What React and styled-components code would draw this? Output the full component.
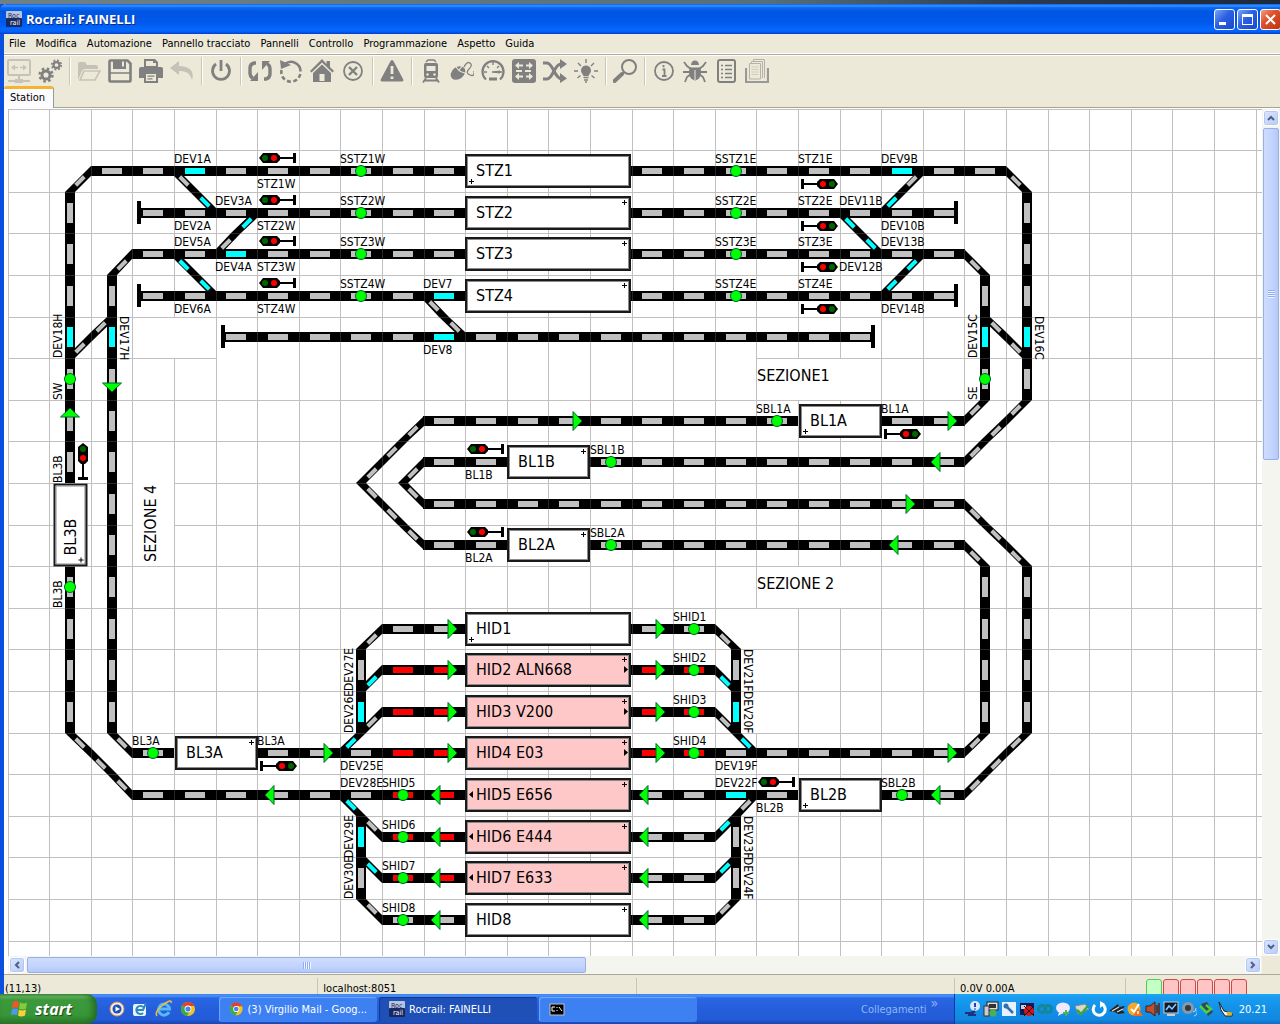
import React from 'react';
import styled, { createGlobalStyle, css } from 'styled-components';

const CELL = 41.6;
const COLS = 46;
const ROWS = 30;

// plan coordinates are counted in half cells: even = cell edge, odd = cell centre
const at = (n) => Math.floor((n * CELL) / 2 + 0.01);

const TRACKS = [
  [[22, 3], [4, 3], [3, 4], [3, 18]],
  [[3, 22], [3, 30], [6, 33], [22, 33]],
  [[22, 7], [6, 7], [5, 8], [5, 30], [6, 31], [8, 31]],
  [[12, 31], [22, 31]],
  [[6, 5], [22, 5]],
  [[6, 9], [22, 9]],
  [[10, 11], [42, 11]],
  [[30, 3], [48, 3], [49, 4], [49, 14], [46, 17], [28, 17]],
  [[24, 17], [20, 17], [19, 18], [20, 19], [46, 19], [49, 22], [49, 30], [46, 33], [42, 33]],
  [[38, 33], [30, 33]],
  [[30, 5], [46, 5]],
  [[30, 7], [46, 7], [47, 8], [47, 14], [46, 15], [42, 15]],
  [[38, 15], [20, 15], [17, 18], [20, 21], [24, 21]],
  [[28, 21], [46, 21], [47, 22], [47, 30], [46, 31], [30, 31]],
  [[30, 9], [46, 9]],
  [[22, 25], [18, 25], [17, 26], [17, 30]],
  [[22, 27], [18, 27], [17, 28]],
  [[22, 29], [18, 29], [17, 30], [16, 31]],
  [[30, 25], [34, 25], [35, 26], [35, 30]],
  [[30, 27], [34, 27], [35, 28]],
  [[30, 29], [34, 29], [35, 30], [36, 31]],
  [[22, 39], [18, 39], [17, 38], [17, 34]],
  [[22, 37], [18, 37], [17, 36]],
  [[22, 35], [18, 35], [17, 34], [16, 33]],
  [[30, 39], [34, 39], [35, 38], [35, 34]],
  [[30, 37], [34, 37], [35, 36]],
  [[30, 35], [34, 35], [35, 34], [36, 33]],
  [[8, 3], [10, 5]],
  [[12, 5], [10, 7]],
  [[8, 7], [10, 9]],
  [[20, 9], [22, 11]],
  [[5, 10], [3, 12]],
  [[44, 3], [42, 5]],
  [[40, 5], [42, 7]],
  [[44, 7], [42, 9]],
  [[47, 10], [49, 12]],
];

const ROUTED = new Set([
  '9,3', '11,7', '21,9', '21,11', '3,11', '5,11', '43,3', '47,11', '49,11', '17,29', '35,29', '17,35', '35,33',
  '9.5,4.5', '11.5,5.5', '8.5,7.5', '9.5,8.5', '42.5,4.5', '40.5,5.5', '41.5,6.5', '43.5,7.5', '42.5,8.5',
  '17.5,27.5', '16.5,30.5', '34.5,27.5', '35.5,30.5', '16.5,33.5', '17.5,36.5', '34.5,34.5', '34.5,36.5',
]);

const OCCUPIED = new Set([
  '19,27', '21,27', '19,29', '21,29', '19,31', '21,31', '31,27', '33,27', '31,29', '33,29', '31,31', '33,31',
  '19,33', '21,33', '19,35', '21,35', '19,37', '21,37',
]);

const BUFFERS = [[6, 5, 1], [6, 9, 1], [10, 11, 1], [42, 11, -1], [46, 5, -1], [46, 9, -1]];

const SENSORS = [
  [17, 3], [17, 5], [17, 7], [17, 9], [35, 3], [35, 5], [35, 7], [35, 9],
  [3, 13], [47, 13], [37, 15], [29, 17], [29, 21], [3, 23], [7, 31],
  [33, 25], [33, 27], [33, 29], [33, 31], [19, 33], [19, 35], [19, 37], [19, 39], [43, 33],
];

const ARROWS = [
  [21, 25, 0], [21, 27, 0], [21, 29, 0], [21, 31, 0], [31, 25, 0], [31, 27, 0], [31, 29, 0], [31, 31, 0],
  [15, 31, 0], [45, 31, 0], [45, 15, 0], [27, 15, 0], [43, 19, 0],
  [45, 17, 180], [43, 21, 180], [45, 33, 180], [13, 33, 180],
  [21, 33, 180], [21, 35, 180], [21, 37, 180], [21, 39, 180],
  [31, 33, 180], [31, 35, 180], [31, 37, 180], [31, 39, 180],
  [5, 13, 90], [3, 15, -90],
];

const SIGNALS = [
  [13, 3, 0], [13, 5, 0], [13, 7, 0], [13, 9, 0],
  [39, 3, 180], [39, 5, 180], [39, 7, 180], [39, 9, 180],
  [23, 17, 0], [23, 21, 0], [43, 15, 180], [13, 31, 180], [37, 33, 0], [3, 17, 90],
];

// [text, column, row, side of the cell]
const LABELS = [
  ['DEV1A', 4, 1, 'top'], ['STZ1W', 6, 1, 'bottom'], ['SSTZ1W', 8, 1, 'top'],
  ['DEV2A', 4, 2, 'bottom'], ['DEV3A', 5, 2, 'top'], ['STZ2W', 6, 2, 'bottom'], ['SSTZ2W', 8, 2, 'top'],
  ['DEV5A', 4, 3, 'top'], ['DEV4A', 5, 3, 'bottom'], ['STZ3W', 6, 3, 'bottom'], ['SSTZ3W', 8, 3, 'top'],
  ['DEV6A', 4, 4, 'bottom'], ['STZ4W', 6, 4, 'bottom'], ['SSTZ4W', 8, 4, 'top'],
  ['DEV7', 10, 4, 'top'], ['DEV8', 10, 5, 'bottom'],
  ['DEV18H', 1, 5, 'left'], ['DEV17H', 2, 5, 'right'], ['SW', 1, 6, 'left'],
  ['BL3B', 1, 8, 'left'], ['BL3B', 1, 11, 'left'],
  ['SSTZ1E', 17, 1, 'top'], ['STZ1E', 19, 1, 'top'], ['DEV9B', 21, 1, 'top'],
  ['SSTZ2E', 17, 2, 'top'], ['STZ2E', 19, 2, 'top'], ['DEV11B', 20, 2, 'top'], ['DEV10B', 21, 2, 'bottom'],
  ['SSTZ3E', 17, 3, 'top'], ['STZ3E', 19, 3, 'top'], ['DEV12B', 20, 3, 'bottom'], ['DEV13B', 21, 3, 'top'],
  ['SSTZ4E', 17, 4, 'top'], ['STZ4E', 19, 4, 'top'], ['DEV14B', 21, 4, 'bottom'],
  ['DEV15C', 23, 5, 'left'], ['DEV16C', 24, 5, 'right'], ['SE', 23, 6, 'left'],
  ['SBL1A', 18, 7, 'top'], ['BL1A', 21, 7, 'top'], ['BL1B', 11, 8, 'bottom'], ['SBL1B', 14, 8, 'top'],
  ['BL2A', 11, 10, 'bottom'], ['SBL2A', 14, 10, 'top'],
  ['BL3A', 3, 15, 'top'], ['BL3A', 6, 15, 'top'], ['DEV25E', 8, 15, 'bottom'], ['DEV28E', 8, 16, 'top'],
  ['SHID1', 16, 12, 'top'], ['SHID2', 16, 13, 'top'], ['SHID3', 16, 14, 'top'], ['SHID4', 16, 15, 'top'],
  ['SHID5', 9, 16, 'top'], ['SHID6', 9, 17, 'top'], ['SHID7', 9, 18, 'top'], ['SHID8', 9, 19, 'top'],
  ['DEV27E', 8, 13, 'left'], ['DEV26E', 8, 14, 'left'], ['DEV29E', 8, 17, 'left'], ['DEV30E', 8, 18, 'left'],
  ['DEV21F', 17, 13, 'right'], ['DEV20F', 17, 14, 'right'], ['DEV19F', 17, 15, 'bottom'],
  ['DEV22F', 17, 16, 'top'], ['BL2B', 18, 16, 'bottom'],
  ['DEV23F', 17, 17, 'right'], ['DEV24F', 17, 18, 'right'], ['SBL2B', 21, 16, 'top'],
];

const BLOCKS = [
  { name: 'STZ1', col: 11, row: 1, span: 4, plus: 'low' },
  { name: 'STZ2', col: 11, row: 2, span: 4 },
  { name: 'STZ3', col: 11, row: 3, span: 4 },
  { name: 'STZ4', col: 11, row: 4, span: 4 },
  { name: 'BL1A', col: 19, row: 7, span: 2, plus: 'low' },
  { name: 'BL1B', col: 12, row: 8, span: 2 },
  { name: 'BL2A', col: 12, row: 10, span: 2 },
  { name: 'BL3B', col: 1, row: 9, span: 2, plus: 'low', vertical: true },
  { name: 'HID1', col: 11, row: 12, span: 4, plus: 'low' },
  { name: 'HID2 ALN668', col: 11, row: 13, span: 4, busy: true, dir: 'right' },
  { name: 'HID3 V200', col: 11, row: 14, span: 4, busy: true, dir: 'right' },
  { name: 'HID4 E03', col: 11, row: 15, span: 4, busy: true, dir: 'right' },
  { name: 'BL3A', col: 4, row: 15, span: 2 },
  { name: 'HID5 E656', col: 11, row: 16, span: 4, busy: true, dir: 'left' },
  { name: 'BL2B', col: 19, row: 16, span: 2, plus: 'low' },
  { name: 'HID6 E444', col: 11, row: 17, span: 4, busy: true, dir: 'left' },
  { name: 'HID7 E633', col: 11, row: 18, span: 4, busy: true, dir: 'left' },
  { name: 'HID8', col: 11, row: 19, span: 4 },
];

// cells that hide the grid behind them: x, y, width, height in half cells
const BLANKS = [
  [36, 12, 6, 2], [36, 22, 6, 2], [6, 16, 2, 6], [6, 10, 4, 2],
  [35, 24, 2, 2], [35, 26, 2, 2], [35, 28, 2, 2],
  ...Array.from({ length: 13 }, (_, i) => [10 + i * 2, 11, 2, 2]),
];

const MENUS = ['File', 'Modifica', 'Automazione', 'Pannello tracciato', 'Pannelli', 'Controllo', 'Programmazione', 'Aspetto', 'Guida'];

const GlobalStyle = createGlobalStyle`
  * {
    box-sizing: border-box;
  }

  body {
    margin: 0;
    overflow: hidden;
    background: #33475c;
    font-family: "DejaVu Sans Condensed", "DejaVu Sans", sans-serif;
    font-size: 11px;
    color: #000;
  }

  button {
    margin: 0;
    padding: 0;
    border: 0;
    background: none;
    font: inherit;
    color: inherit;
    white-space: nowrap;
  }
`;

const Screen = styled.div`
  display: flex;
  flex-direction: column;
  height: 100vh;
`;

const Wallpaper = styled.div`
  flex: none;
  height: 4px;
  background: linear-gradient(90deg, #6f8186 0, #54707c 60%, #2a3a50 80%, #1d2a3d 100%);
`;

const Window = styled.main`
  flex: 1;
  min-height: 0;
  display: flex;
  flex-direction: column;
  border-left: 4px solid #0a4fe0;
  background: #ece9d8;
`;

const TitleBar = styled.header`
  flex: none;
  height: 30px;
  margin-left: -4px;
  padding: 0 0 0 6px;
  display: flex;
  align-items: center;
  gap: 4px;
  border-radius: 6px 0 0 0;
  background: linear-gradient(#0a5be8 0, #3a92ff 6%, #0a6bf5 12%, #0055e2 25%, #0058ea 60%, #0468ff 85%, #0560f2 92%, #003dd0 100%);
`;

const Title = styled.h1`
  flex: 1;
  margin: 0;
  font-family: "Open Sans", "Noto Sans", sans-serif;
  font-size: 13px;
  font-weight: 700;
  color: #fff;
  text-shadow: 1px 1px #0a2a80;
`;

const WindowButton = styled.button`
  width: 21px;
  height: 21px;
  margin-right: -2px;
  display: grid;
  place-items: center;
  border: 1px solid #fff;
  border-radius: 3px;
  background: ${({ $close }) =>
    $close ? 'linear-gradient(135deg, #f0a080, #e0502c 40%, #c03410)' : 'linear-gradient(135deg, #7ba2f4, #2c60e4 45%, #1a48cc)'};

  &:last-child {
    margin-right: -1px;
  }
`;

const WindowButtons = styled.div`
  display: flex;
  gap: 4px;
`;

const MenuBar = styled.nav`
  flex: none;
  height: 20px;
  padding: 0 5px;
  display: flex;
  align-items: center;
  gap: 10px;
  border-bottom: 1px solid #fff;
`;

const Toolbar = styled.div`
  flex: none;
  height: 32px;
  display: flex;
  align-items: center;
  border-top: 1px solid #aca899;
  box-shadow: inset 0 1px #fff;
`;

const ToolButton = styled.button`
  width: 31px;
  height: 30px;
  padding-right: 1px;
  display: grid;
  place-items: center;
  color: ${({ $off }) => ($off ? '#c5c3b8' : '#808080')};
`;

const ToolSeparator = styled.span`
  width: 8px;
  height: 28px;
  background: linear-gradient(90deg, transparent 3px, #c9c6b6 3px, #c9c6b6 4px, #fff 4px, #fff 5px, transparent 5px);
`;

const Tabs = styled.div`
  flex: none;
  height: 22px;
  border-bottom: 1px solid #a5a397;
`;

const Tab = styled.button`
  height: 22px;
  width: 50px;
  padding: 0 2px 2px 0;
  border: 1px solid #919b9c;
  border-top: 3px solid #f5b335;
  border-bottom: 0;
  border-left: 0;
  border-radius: 3px 3px 0 0;
  background: #fcfcfe;
`;

const Workspace = styled.section`
  flex: 1;
  min-height: 0;
  padding: 1px 0 0 4px;
  display: grid;
  grid-template-columns: minmax(0, 1fr) 18px;
  grid-template-rows: minmax(0, 1fr) 18px;
  border-bottom: 1px solid #aca899;
  background: #fff;
`;

const Canvas = styled.div`
  position: relative;
  overflow: hidden;
  background: #fff;
`;

const Plan = styled.svg`
  display: block;

  text {
    font-family: "DejaVu Sans Condensed", "DejaVu Sans", sans-serif;
    font-size: 12px;
    fill: #000;
  }

  text.section {
    font-size: 16px;
  }
`;

const BlockBox = styled.button`
  position: absolute;
  height: 34px;
  padding-left: 9px;
  border: 2px solid #1a1a1a;
  box-shadow: inset 0 0 0 1px #8a8a8a;
  background: ${({ $busy }) => ($busy ? '#ffc8c8' : '#fff')};
  font-size: 16px;
  line-height: 30px;
  text-align: left;
  ${({ $vertical }) => $vertical && css`transform: rotate(-90deg);`}
`;

const BlockMark = styled.svg`
  position: absolute;
  width: 7px;
  height: 7px;
  ${({ $place }) => $place === 'high' && css`top: 1px; right: 1px;`}
  ${({ $place }) => $place === 'low' && css`bottom: 1px; left: 1px;`}
  ${({ $place }) => $place === 'right' && css`top: 11px; right: 0;`}
  ${({ $place }) => $place === 'left' && css`top: 11px; left: 1px;`}
`;

const ScrollBar = styled.div`
  display: flex;
  gap: 2px;
  padding: 1px;
  background: #f5f5f0;
  flex-direction: ${({ $vertical }) => ($vertical ? 'column' : 'row')};
`;

const ScrollButton = styled.button`
  flex: none;
  width: 16px;
  height: 16px;
  display: grid;
  place-items: center;
  border: 1px solid #fff;
  border-radius: 3px;
  box-shadow: inset 0 0 0 1px #b4c8f6;
  background: linear-gradient(135deg, #dce6ff, #b8cbf8);
`;

const ScrollTrack = styled.div`
  flex: 1;
  min-height: 0;
  min-width: 0;
  display: flex;
  flex-direction: ${({ $vertical }) => ($vertical ? 'column' : 'row')};
`;

const ScrollThumb = styled.div`
  flex: 0 0 ${({ $size }) => $size};
  display: grid;
  place-items: center;
  border: 1px solid #98b0e8;
  border-radius: 2px;
  background: ${({ $vertical }) => `linear-gradient(${$vertical ? '90deg' : '180deg'}, #cfdcff, #c2d3fd 60%, #b4c8f8)`};

  &::after {
    content: '';
    width: ${({ $vertical }) => ($vertical ? '7px' : '8px')};
    height: ${({ $vertical }) => ($vertical ? '8px' : '7px')};
    background: repeating-linear-gradient(
      ${({ $vertical }) => ($vertical ? '180deg' : '90deg')},
      #8cb0f8 0,
      #8cb0f8 1px,
      #eef4fe 1px,
      #eef4fe 2px
    );
  }
`;

const Corner = styled.div`
  background: #ece9d8;
`;

const StatusBar = styled.footer`
  flex: none;
  height: 19px;
  padding-top: 3px;
  display: flex;
  overflow: hidden;
  line-height: 22px;
`;

const StatusCell = styled.span`
  flex: ${({ $width }) => ($width ? `0 0 ${$width}` : '1')};
  padding-left: ${({ $first }) => ($first ? '1px' : '5px')};
  border-right: 1px solid #c9c6b6;
`;

const Leds = styled.div`
  flex: 0 0 154px;
  padding: 1px 0 0 20px;
  display: flex;
  gap: 1px;
`;

const Led = styled.span`
  width: 16px;
  height: 20px;
  border: 1px solid ${({ $on }) => ($on ? '#58c858' : '#d04848')};
  border-radius: 3px;
  background: ${({ $on }) => ($on ? '#c4ffc4' : '#ffc4c4')};
`;

const Taskbar = styled.footer`
  flex: none;
  height: 30px;
  display: flex;
  background: linear-gradient(#3a80f0 0, #4a92f8 6%, #2a66e4 14%, #245edb 50%, #235bd8 85%, #1a45b0 100%);
  color: #fff;
`;

const StartButton = styled.button`
  width: 97px;
  padding-left: 10px;
  display: flex;
  align-items: center;
  gap: 6px;
  border-radius: 0 10px 10px 0;
  background: linear-gradient(#4f9a50 0, #6ab864 8%, #3c9a3c 20%, #379637 70%, #2c7a2c 100%);
  box-shadow: inset -4px 0 6px #256a25;
  font-family: "Open Sans", "Noto Sans", sans-serif;
  font-size: 16px;
  font-weight: 700;
  font-style: italic;
  text-shadow: 1px 1px 1px #1c4a1c;
`;

const QuickLaunch = styled.div`
  width: 122px;
  padding-left: 12px;
  display: flex;
  align-items: center;
  gap: 7px;
`;

const Tasks = styled.div`
  flex: 1;
  min-width: 0;
  display: flex;
  align-items: center;
  gap: 2px;
`;

const TaskButton = styled.button`
  flex: 0 1 158px;
  height: 25px;
  padding: 0 10px;
  display: flex;
  align-items: center;
  gap: 4px;
  overflow: hidden;
  border-radius: 3px;
  background: ${({ $active }) => ($active ? '#1e50b8' : '#3c80f2')};
  box-shadow: inset 1px 1px 1px ${({ $active }) => ($active ? '#123a8c' : '#70a8ff')};
`;

const LinksBand = styled.button`
  width: 93px;
  display: flex;
  align-items: center;
  gap: 4px;
  color: #8fb6f8;
`;

const Chevrons = styled.span`
  font-size: 14px;
  line-height: 18px;
  align-self: flex-start;
`;

const Tray = styled.div`
  flex: none;
  min-width: 326px;
  padding: 0 13px 0 10px;
  display: flex;
  align-items: center;
  gap: 2px;
  border-left: 1px solid #0a3aa0;
  background: linear-gradient(#18a8f8 0, #1a9cf0 10%, #1290e8 50%, #1288e0 85%, #0f6cc8 100%);
`;

const Clock = styled.time`
  margin-left: auto;
`;

const Gear = ({ cx, cy, r }) => (
  <g fill="none" stroke="currentColor">
    <circle cx={cx} cy={cy} r={r * 0.54} strokeWidth={r * 0.4} />
    <circle cx={cx} cy={cy} r={r * 0.86} strokeWidth={r * 0.32} strokeDasharray={`${r * 0.34} ${r * 0.335}`} />
  </g>
);

const ICONS = {
  network: (
    <g fill="none" stroke="currentColor">
      <rect x="1" y="1" width="22" height="15" rx="1" strokeWidth="2" />
      <path d="M6 8.5h5M13 8.5h5" strokeWidth="1.6" />
      <path d="M8 5.5l-4 3 4 3zM16 5.5l4 3-4 3z" fill="currentColor" stroke="none" />
      <path d="M12 17v4M1 22h22" strokeWidth="2" />
      <path d="M8 22h8" strokeWidth="4" />
    </g>
  ),
  gears: (
    <>
      <Gear cx="8" cy="16" r="7.5" />
      <Gear cx="18.5" cy="6" r="5.5" />
    </>
  ),
  open: (
    <g fill="currentColor">
      <path d="M1 21V5q0-2 2-2h5l2 3h9q2 0 2 2v2H8q-2 0-3 2z" />
      <path d="M7 12h16l-5 9H3z" fill="none" stroke="currentColor" strokeWidth="1.6" />
    </g>
  ),
  save: (
    <g fill="none" stroke="currentColor">
      <path d="M1.5 2.5q0-1 1-1h17l3 3v17q0 1-1 1h-19q-1 0-1-1z" strokeWidth="2.6" />
      <path d="M5 1h13v9H5z" fill="currentColor" stroke="none" />
      <path d="M14 2.500h2v5h-2z" fill="#ece9d8" stroke="none" />
      <path d="M2 14h20" strokeWidth="1.500" />
    </g>
  ),
  print: (
    <g fill="currentColor">
      <path d="M5 0h11l3 3v5H5zM7 2v5h10V4h-3V2z" fillRule="evenodd" />
      <path d="M2 8h20q2 0 2 2v9h-5v-5H5v5H0v-9q0-2 2-2z" />
      <path d="M5 13h14v11H5zM7 15v7h10v-7z" fillRule="evenodd" />
      <path d="M8.500 16.500h7v1.300h-7zM8.500 19.300h5v1.300h-5z" />
    </g>
  ),
  undo: <path d="M9 2L0 9l9 7v-4c7 0 11 2 13 9 3-9-3-14-13-14z" fill="currentColor" />,
  power: (
    <g fill="none" stroke="currentColor" strokeWidth="2.800">
      <path d="M7 5a8.500 8.500 0 1 0 10 0" />
      <path d="M12 1v11" />
    </g>
  ),
  loop: (
    <g fill="none" stroke="currentColor" strokeWidth="3.400">
      <path d="M8 4H6Q2 5 2 9v5q0 4 3 5" />
      <path d="M16 20h2q4-1 4-5v-5q0-4-3-5" />
      <path d="M10 13v9H2zM14 11V2h8z" fill="currentColor" stroke="none" />
    </g>
  ),
  rotate: (
    <g fill="none" stroke="currentColor" strokeWidth="2.600">
      <path d="M6 5a9.500 9.500 0 0 1 15.500 7.500" />
      <path d="M21.300 15A9.500 9.500 0 0 1 2.500 11" strokeDasharray="4 2.500" />
      <path d="M1 1l1 9 10-4z" fill="currentColor" stroke="none" />
    </g>
  ),
  home: (
    <g fill="currentColor">
      <path d="M12 0L0 12l1.500 1.500L12 3.500l10.500 10L24 12l-4-4V2h-3.500v3z" />
      <path d="M12 5.500L3 14v9h18v-9zM9.500 22v-7h5v7z" fillRule="evenodd" />
    </g>
  ),
  cancel: (
    <g fill="none" stroke="currentColor">
      <circle cx="12" cy="12" r="9" strokeWidth="1.800" />
      <path d="M8 8l8 8M16 8l-8 8" strokeWidth="2.400" />
    </g>
  ),
  warning: (
    <g>
      <path d="M12 1q1 0 2 2l9 17q1 2.500-1 2.500H2q-2 0-1-2.500L10 3q1-2 2-2z" fill="currentColor" />
      <path d="M12 7v8M12 17.500v2.500" stroke="#ece9d8" strokeWidth="2.800" />
    </g>
  ),
  train: (
    <g fill="none" stroke="currentColor">
      <path d="M7 3l2-2h6l2 2" strokeWidth="1.500" />
      <path d="M6.500 4h11q1.500 0 1.500 2v11q0 2-2 2H7q-2 0-2-2V6q0-2 1.500-2z" fill="currentColor" stroke="none" />
      <path d="M7.500 7h9v5h-9z" fill="#ece9d8" stroke="none" />
      <circle cx="8.500" cy="15.500" r="1.200" fill="#ece9d8" stroke="none" />
      <circle cx="15.500" cy="15.500" r="1.200" fill="#ece9d8" stroke="none" />
      <path d="M7 19l-3 4.500M17 19l3 4.500M6 21.500h12" strokeWidth="1.800" />
    </g>
  ),
  mouse: (
    <g fill="none" stroke="currentColor">
      <ellipse cx="8" cy="14" rx="8" ry="6" transform="rotate(-38 8 14)" fill="currentColor" stroke="none" />
      <path d="M6 7q1 5 9 7M9 11l4-5" stroke="#ece9d8" strokeWidth="1.200" />
      <path d="M14 8q3-6 6-4t-1 6 1 6 4-4" strokeWidth="1.300" />
    </g>
  ),
  gauge: (
    <g fill="none" stroke="currentColor">
      <path d="M5 20.500A10.500 10.500 0 1 1 19 20.500" strokeWidth="2.200" />
      <path d="M12 3v3M3 13h3M18 7l-2 2M6 7l2 2M21 13h-3" strokeWidth="1.400" />
      <path d="M11 13l8-1v2z" fill="currentColor" strokeWidth="1" />
      <path d="M8 20h8" strokeWidth="3" />
    </g>
  ),
  routes: (
    <g>
      <rect width="24" height="24" rx="3" fill="currentColor" />
      <g stroke="#ece9d8" strokeWidth="2">
        <path d="M5 6.500h6M14 6.500h5M4 12h6M13 12h6M5 17.500h6M14 17.500h5" />
        <path d="M7 3l-4 3.500L7 10zM17 3v7l4-3.500zM7 14l-4 3.500L7 21zM17 14v7l4-3.500z" fill="#ece9d8" stroke="none" />
      </g>
    </g>
  ),
  shuffle: (
    <g fill="none" stroke="currentColor" strokeWidth="3">
      <path d="M0 4h4q3 0 7 8t8 8M0 20h4q3 0 7-8t8-7" />
      <path d="M17 0l7 5-7 5zM17 14l7 5.500-7 4.500z" fill="currentColor" stroke="none" />
    </g>
  ),
  bulb: (
    <g fill="currentColor" stroke="currentColor">
      <path d="M12 6.500a5 5 0 0 1 3.500 8.500l-1 2h-5l-1-2A5 5 0 0 1 12 6.500z" stroke="none" />
      <path d="M9.500 18.500h5M10 21h4M11 23h2" strokeWidth="1.500" />
      <path d="M12 0v4M4 4l3 3M20 4l-3 3M0 12h4M20 12h4M3.500 19l3-2.500M20.500 19l-3-2.500" strokeWidth="1.400" />
    </g>
  ),
  find: (
    <g fill="none" stroke="currentColor">
      <circle cx="16" cy="8" r="7" strokeWidth="2" />
      <path d="M11 13l-2 2" strokeWidth="2" />
      <path d="M9 15l-7.500 7" strokeWidth="4" strokeLinecap="round" />
    </g>
  ),
  info: (
    <g fill="none" stroke="currentColor">
      <circle cx="12" cy="12" r="9" strokeWidth="1.800" />
      <path d="M10.500 10.500h2v6M10 17h4.500M11.500 6v2.200" strokeWidth="1.800" />
    </g>
  ),
  bug: (
    <g fill="currentColor" stroke="currentColor">
      <path d="M8 6a4 4.500 0 0 1 8 0z" stroke="none" />
      <path d="M6.500 8.500h11q1 4 0 8t-5.500 5q-4.500-1-5.500-5t0-8z" stroke="none" />
      <path d="M1 3l3 4 4 3M23 3l-3 4-4 3M0 13h7M24 13h-7M2 23l2-5 4-3M22 23l-2-5-4-3" fill="none" strokeWidth="1.800" />
      <path d="M12 11v10" stroke="#ece9d8" strokeWidth="1" />
    </g>
  ),
  list: (
    <g fill="none" stroke="currentColor">
      <rect x="4" y="1" width="17" height="22" rx="2" strokeWidth="2" />
      <path d="M11 6.500h7M11 10.500h7M11 14.500h7M11 18.500h7M7 6.500h2M7 10.500h2M7 14.500h2M7 18.500h2" strokeWidth="1.400" />
    </g>
  ),
  docs: (
    <g fill="none" stroke="#b5b3a8">
      <path d="M1 9v14h22V9" stroke="#999" strokeWidth="2.200" />
      <path d="M8.500 3V.5h11V19M6.500 5V2.500h11V19" />
      <path d="M4.500 20V4.500h11V20z" fill="#ece9d8" />
      <path d="M6.500 8h7M6.500 10.500h7M6.500 13h7M6.500 15.500h7" stroke="#cfccc0" />
    </g>
  ),
};

// null stands for a separator
const TOOLS = [
  ['network', 'Collega', true], ['gears', 'Proprietà'], null,
  ['open', 'Apri', true], ['save', 'Salva'], ['print', 'Stampa'], ['undo', 'Annulla', true], null,
  ['power', 'Alimentazione'], null,
  ['loop', 'Automatico'], ['rotate', 'Ripristina'], ['home', 'Casa'], ['cancel', 'Ferma'], null,
  ['warning', 'Emergenza'], null,
  ['train', 'Locomotive'], ['mouse', 'Palmare'], ['gauge', 'Velocità'], ['routes', 'Scambi'], ['shuffle', 'Itinerari'], ['bulb', 'Luci'], null,
  ['find', 'Cerca'], null,
  ['info', 'Informazioni'], ['bug', 'Segnala'], ['list', 'Elenco'], ['docs', 'Documenti'],
];

const AppIcon = () => (
  <svg width="16" height="16" viewBox="0 0 16 16">
    <rect width="16" height="8" rx="1" fill="#b8c4dc" />
    <rect y="7" width="16" height="9" rx="1" fill="#182860" />
    <text x="2" y="7" fontSize="7" fill="#182860">Roc</text>
    <text x="4" y="14" fontSize="7" fill="#fff">rail</text>
  </svg>
);

const ChromeIcon = () => (
  <svg width="16" height="16" viewBox="0 0 16 16">
    <circle cx="8" cy="8" r="7" fill="#f2c318" />
    <path d="M8 8L2 4.500A7 7 0 0 1 14.500 5H8z" fill="#e2402c" />
    <path d="M8 8L2 4.500A7 7 0 0 0 7 15l3-5z" fill="#3aa84c" />
    <circle cx="8" cy="8" r="3.400" fill="#fff" />
    <circle cx="8" cy="8" r="2.600" fill="#4484f0" />
  </svg>
);

const TRAY_ICONS = [
  <g key="0"><circle cx="10" cy="5" r="5" fill="#dce8ff" /><path d="M10 2v4M10 7.500v1" stroke="#2040c0" strokeWidth="2" /><path d="M0 12h8l2-2M3 14h8" stroke="#203080" strokeWidth="2" /></g>,
  <g key="1"><rect x="4" y="1" width="11" height="8" fill="#ddd" stroke="#222" /><path d="M6 3h7v4H6z" fill="#333" /><rect x="1" y="5" width="5" height="10" fill="#ccc" stroke="#333" /><circle cx="10" cy="12" r="3.500" fill="#4cb050" /></g>,
  <g key="2"><rect x="1" y="1" width="14" height="14" fill="#e8f2ff" /><path d="M4 4l8 8" stroke="#3070b0" strokeWidth="2.500" /><circle cx="5" cy="5" r="2.500" fill="#3070b0" /></g>,
  <g key="3"><rect x="1" y="2" width="14" height="12" fill="#111a50" /><path d="M2 4h5v4H2z" fill="#c8d0e8" /><circle cx="10" cy="10" r="5" fill="#d01818" /><path d="M5 5l10 10M15 5L5 15" stroke="#400" /></g>,
  <g key="4" fill="none" stroke="#128898" strokeWidth="3"><circle cx="5" cy="8" r="3.500" /><circle cx="11" cy="8" r="3.500" /></g>,
  <g key="5"><ellipse cx="8" cy="7" rx="7" ry="5.500" fill="#f0e8ff" /><path d="M4 11l-1 4 5-3z" fill="#f0e8ff" /><path d="M11 9v6M8 12h6" stroke="#48b848" strokeWidth="2" /></g>,
  <g key="6"><path d="M2 5l10-2 4 5-11 5z" fill="#d8d8d0" stroke="#888" /><path d="M4 9l4 4 7-8" fill="none" stroke="#38a838" strokeWidth="2.500" /></g>,
  <g key="7"><path d="M4 4a6 6 0 1 0 7-1" fill="none" stroke="#fff" strokeWidth="3" /><path d="M9 0v7l5-4z" fill="#fff" /></g>,
  <g key="8"><path d="M0 10l9-7 1 3 6-1-3 4 3 3-7 1-3-2z" fill="#222" /><path d="M3 10l7-4M8 11l6-3" stroke="#ddd" strokeWidth="1.300" /></g>,
  <g key="9"><circle cx="7" cy="8" r="6.500" fill="#f8a828" /><path d="M4 8l3 3 5-8" fill="none" stroke="#fff" strokeWidth="2" /><path d="M11 7l5 8H6z" fill="#f07018" /><path d="M11 10v3" stroke="#fff" strokeWidth="1.500" /></g>,
  <g key="10"><path d="M1 5h4l5-4v14l-5-4H1z" fill="#c05028" stroke="#501808" /><path d="M12 4v8M14 2v12" stroke="#602010" strokeWidth="1.500" /></g>,
  <g key="11"><rect x="1" y="1" width="14" height="11" fill="#101830" stroke="#ccc" /><path d="M3 9l3-4 3 3 4-5" fill="none" stroke="#80d0ff" strokeWidth="1.500" /><path d="M4 14h8" stroke="#ccc" strokeWidth="2" /></g>,
  <g key="12"><circle cx="7" cy="7" r="6" fill="#8c98a8" /><circle cx="7" cy="7" r="3" fill="#303840" /><path d="M12 11q3 0 3-4M13 15q4-1 3-6" fill="none" stroke="#b8d8ff" /></g>,
  <g key="13"><path d="M2 3l6-2 6 10-5 4z" fill="#3a4450" /><path d="M1 5l7 7M7 4l5 4-5 4" fill="none" stroke="#48d048" strokeWidth="2.500" /></g>,
  <g key="14"><path d="M2 1l5 9 8 2v3H8L4 9z" fill="#f4f4f4" stroke="#222" /><path d="M10 12l5 1" stroke="#d8b020" strokeWidth="3" /></g>,
];

const stepsOf = (line) => {
  const steps = [];
  for (let i = 1; i < line.length; i += 1) {
    const [x1, y1] = line[i - 1];
    const [x2, y2] = line[i];
    const dx = Math.sign(x2 - x1);
    const dy = Math.sign(y2 - y1);
    const diagonal = dx !== 0 && dy !== 0;
    const stride = diagonal ? 1 : 2;
    const count = Math.max(Math.abs(x2 - x1), Math.abs(y2 - y1)) / stride;
    for (let n = 0; n < count; n += 1) {
      const x = x1 + dx * stride * (n + 0.5);
      const y = y1 + dy * stride * (n + 0.5);
      let angle = dx === 0 ? 90 : 0;
      if (diagonal) angle = dx === dy ? 45 : -45;
      steps.push({ x, y, angle, diagonal });
    }
  }
  return steps;
};

const STEPS = TRACKS.flatMap(stepsOf);

const dashColor = ({ x, y }) => {
  const key = `${x},${y}`;
  if (ROUTED.has(key)) return '#00ffff';
  if (OCCUPIED.has(key)) return '#ff0000';
  return '#c0c0c0';
};

const Rail = ({ step }) => {
  const { x, y, angle, diagonal } = step;
  const buffer = BUFFERS.find(([bx, by, dir]) => by === y && bx + dir === x);
  if (diagonal) {
    const x1 = at(x - 0.5);
    const x2 = at(x + 0.5);
    const down = angle === 45;
    const y1 = at(down ? y - 0.5 : y + 0.5);
    const y2 = at(down ? y + 0.5 : y - 0.5);
    const upright = Number.isInteger((x - 0.5) / 2);
    // the end on a side edge is cut upright, the one on a top or bottom edge level
    const side = (px, py) => [[px, py - 5], [px, py + 5]];
    const level = (px, py) => (down ? [[px + 5, py], [px - 5, py]] : [[px - 5, py], [px + 5, py]]);
    const start = upright ? side(x1, y1) : level(x1, y1);
    const end = (upright ? level(x2, y2) : side(x2, y2)).reverse();
    return <polygon points={[...start, ...end].join(' ')} />;
  }
  if (buffer) {
    const [edge, , dir] = buffer;
    return (
      <>
        <rect x={dir > 0 ? at(edge) + 6 : at(edge) - 42} y={at(y) - 5} width="36" height="10" />
        <rect x={dir > 0 ? at(edge) + 5 : at(edge) - 10} y={at(y) - 12} width="4" height="23" />
      </>
    );
  }
  return <rect x={at(x) - 21} y={at(y) - 5} width="42" height="10" transform={`rotate(${angle} ${at(x)} ${at(y)})`} />;
};

const Dash = ({ step }) => {
  const { x, y, angle, diagonal } = step;
  const length = diagonal ? 12 : 20;
  const thickness = diagonal ? 4 : 6;
  return (
    <rect
      x={at(x) - length / 2}
      y={at(y) - thickness / 2}
      width={length}
      height={thickness}
      fill={dashColor(step)}
      transform={`rotate(${angle} ${at(x)} ${at(y)})`}
    />
  );
};

const Signal = ({ x, y, angle }) => (
  <g transform={`translate(${at(x)} ${at(y)}) rotate(${angle})`}>
    <path d="M-19 -13l4-5H-1l3 3v4l-3 3H-15z" />
    <path d="M2 -13H16" stroke="#000" strokeWidth="2" />
    <rect x="15" y="-18" width="3" height="10" />
    <circle cx="-13" cy="-13" r="3" fill="#006400" />
    <circle cx="-4" cy="-13" r="3" fill="#ff0000" />
  </g>
);

const TURN = { top: 0, bottom: 0, left: -90, right: 90 };

const Grid = () => (
  <g fill="#c0c0c0">
    {Array.from({ length: COLS }, (_, i) => (
      <rect key={`v${i}`} x={at(i * 2)} y="0" width="1" height={at(ROWS * 2)} />
    ))}
    {Array.from({ length: ROWS }, (_, i) => (
      <rect key={`h${i}`} x="0" y={at(i * 2)} width={at(COLS * 2)} height="1" />
    ))}
  </g>
);

const Blanks = ({ fill }) => (
  <g fill={fill}>
    {BLANKS.map(([x, y, w, h]) => (
      <rect key={`${x},${y}`} x={at(x) + 1} y={at(y) + 1} width={at(x + w) - at(x) - 1} height={at(y + h) - at(y) - 1} />
    ))}
  </g>
);

const Block = ({ block }) => {
  const width = at(block.span * 2);
  const centreX = block.vertical ? at(block.col * 2 + 1) : at(block.col * 2 + block.span);
  const centreY = block.vertical ? at(block.row * 2 + block.span) : at(block.row * 2 + 1);
  const place = { left: Math.round(centreX - width / 2), top: centreY - 17, width };
  return (
    <BlockBox type="button" $busy={block.busy} $vertical={block.vertical} style={place}>
      {block.name}
      <BlockMark $place={block.plus || 'high'} viewBox="0 0 7 7">
        <path d="M3 1h1v2h2v1H4v2H3V4H1V3h2z" />
      </BlockMark>
      {block.dir && (
        <BlockMark $place={block.dir} viewBox="0 0 7 7">
          <path d={block.dir === 'right' ? 'M2 0l4 3.500L2 7z' : 'M5 0L1 3.500 5 7z'} />
        </BlockMark>
      )}
    </BlockBox>
  );
};

const TrackPlan = () => (
  <Canvas>
    <Plan width={at(COLS * 2)} height={at(ROWS * 2)}>
      <mask id="grid-cells">
        <rect width="100%" height="100%" fill="#fff" />
        <Blanks fill="#000" />
      </mask>
      <g mask="url(#grid-cells)">
        <Grid />
      </g>
      {STEPS.map((step, i) => <Rail key={i} step={step} />)}
      {STEPS.map((step, i) => <Dash key={i} step={step} />)}
      <g opacity=".2" mask="url(#grid-cells)">
        <Grid />
      </g>
      {SIGNALS.map(([x, y, angle]) => <Signal key={`${x},${y}`} x={x} y={y} angle={angle} />)}
      {ARROWS.map(([x, y, angle]) => (
        <path
          key={`${x},${y}`}
          d="M4 -9.500L13 0L4 9.500z"
          fill="#00ff00"
          stroke="#063"
          transform={`translate(${at(x)} ${at(y)}) rotate(${angle})`}
        />
      ))}
      {SENSORS.map(([x, y]) => (
        <circle key={`${x},${y}`} cx={at(x)} cy={at(y)} r="5.5" fill="#00ff00" stroke="#063" />
      ))}
      {LABELS.map(([text, col, row, side]) => (
        <g
          key={`${text}${row}${col}`}
          transform={`translate(${at(col * 2 + 1)} ${at(row * 2 + 1)}) rotate(${TURN[side]})`}
        >
          <text x="-21" y={side === 'bottom' ? 17 : -8}>{text}</text>
        </g>
      ))}
      <text className="section" x={at(36) + 1} y={at(13) + 2}>SEZIONE1</text>
      <text className="section" x={at(36) + 1} y={at(23) + 2}>SEZIONE 2</text>
      <text className="section" transform={`translate(${at(7) + 3} ${at(22) - 4}) rotate(-90)`}>SEZIONE 4</text>
    </Plan>
    {BLOCKS.map((block) => <Block key={block.name} block={block} />)}
  </Canvas>
);

const Chevron = ({ angle }) => (
  <svg width="8" height="8" viewBox="0 0 8 8">
    <path d="M1 6l3-3 3 3" fill="none" stroke="#4d6185" strokeWidth="2" transform={`rotate(${angle} 4 4)`} />
  </svg>
);

const App = () => {
  return (
    <>
      <GlobalStyle />
      <Screen>
        <Wallpaper />
        <Window>
          <TitleBar>
            <AppIcon />
            <Title>Rocrail: FAINELLI</Title>
            <WindowButtons>
              <WindowButton type="button" aria-label="Riduci">
                <svg width="13" height="13"><path d="M1 9h7v3H1z" fill="#fff" /></svg>
              </WindowButton>
              <WindowButton type="button" aria-label="Ingrandisci">
                <svg width="13" height="13"><path d="M1 1h11v11H1zM2 4v7h9V4z" fill="#fff" fillRule="evenodd" /></svg>
              </WindowButton>
              <WindowButton type="button" aria-label="Chiudi" $close>
                <svg width="13" height="13"><path d="M2 2l9 9M11 2l-9 9" stroke="#fff" strokeWidth="2" /></svg>
              </WindowButton>
            </WindowButtons>
          </TitleBar>
          <MenuBar>
            {MENUS.map((name) => <button type="button" key={name}>{name}</button>)}
          </MenuBar>
          <Toolbar>
            {TOOLS.map((tool, i) =>
              tool ? (
                <ToolButton type="button" key={tool[0]} aria-label={tool[1]} $off={tool[2]}>
                  <svg width="24" height="24" viewBox="0 0 24 24">{ICONS[tool[0]]}</svg>
                </ToolButton>
              ) : (
                <ToolSeparator key={i} />
              )
            )}
          </Toolbar>
          <Tabs>
            <Tab type="button">Station</Tab>
          </Tabs>
          <Workspace>
            <TrackPlan />
            <ScrollBar $vertical>
              <ScrollButton type="button" aria-label="Su"><Chevron angle={0} /></ScrollButton>
              <ScrollTrack $vertical><ScrollThumb $vertical $size="41%" /></ScrollTrack>
              <ScrollButton type="button" aria-label="Giù"><Chevron angle={180} /></ScrollButton>
            </ScrollBar>
            <ScrollBar>
              <ScrollButton type="button" aria-label="Sinistra"><Chevron angle={-90} /></ScrollButton>
              <ScrollTrack><ScrollThumb $size="46%" /></ScrollTrack>
              <ScrollButton type="button" aria-label="Destra"><Chevron angle={90} /></ScrollButton>
            </ScrollBar>
            <Corner />
          </Workspace>
          <StatusBar>
            <StatusCell $first>(11,13)</StatusCell>
            <StatusCell>localhost:8051</StatusCell>
            <StatusCell />
            <StatusCell $width="171px">0.0V 0.00A</StatusCell>
            <Leds>
              <Led $on />
              <Led />
              <Led />
              <Led />
              <Led />
              <Led />
            </Leds>
          </StatusBar>
        </Window>
        <Taskbar>
          <StartButton type="button">
            <svg width="19" height="18" viewBox="0 0 19 18">
              <path d="M3 2q3-2 6 0L8 8q-3-1-6 0z" fill="#f0562c" />
              <path d="M10 2.500q4 2 7 0l-1 6q-3 2-7 0z" fill="#84cc3c" />
              <path d="M2 9q3-1 6 0l-1 6q-3-1-6 0z" fill="#4c98f0" />
              <path d="M9 9.500q3 2 7 0l-1 6q-4 2-7 0z" fill="#fcd038" />
            </svg>
            start
          </StartButton>
          <QuickLaunch>
            <svg width="16" height="16" viewBox="0 0 16 16">
              <circle cx="8" cy="8" r="7" fill="#e8eef8" stroke="#e89030" />
              <circle cx="8" cy="8" r="4.500" fill="#2050b0" />
              <path d="M6.500 5.500L11 8l-4.500 2.500z" fill="#fff" />
            </svg>
            <svg width="16" height="16" viewBox="0 0 16 16">
              <rect x="1" y="3" width="13" height="12" rx="2" fill="#e8f4ff" />
              <path d="M11 6a4 4 0 1 0 0 6M5 9h6l3-7" fill="none" stroke="#2888c0" strokeWidth="2" />
            </svg>
            <svg width="18" height="18" viewBox="0 0 18 18">
              <path d="M14 12a5.500 5.500 0 1 1 .5-3H5" fill="none" stroke="#58b8f8" strokeWidth="3" />
              <path d="M2 16Q-1 12 8 5t8-2" fill="none" stroke="#f4c030" strokeWidth="1.500" />
            </svg>
            <ChromeIcon />
          </QuickLaunch>
          <Tasks>
            <TaskButton type="button"><ChromeIcon />(3) Virgilio Mail - Goog...</TaskButton>
            <TaskButton type="button" $active><AppIcon />Rocrail: FAINELLI</TaskButton>
            <TaskButton type="button" aria-label="Prompt dei comandi">
              <svg width="16" height="16" viewBox="0 0 16 16">
                <rect x="1" y="3" width="14" height="11" fill="#000" stroke="#c0c0c0" />
                <path d="M6 6H3v4h3M8 6v1M8 9v1M10 6l3 4" fill="none" stroke="#fff" />
              </svg>
            </TaskButton>
          </Tasks>
          <LinksBand type="button">
            Collegamenti
            <Chevrons>»</Chevrons>
          </LinksBand>
          <Tray>
            {TRAY_ICONS.map((icon, i) => (
              <svg key={i} width="16" height="16" viewBox="0 0 16 16">{icon}</svg>
            ))}
            <Clock>20.21</Clock>
          </Tray>
        </Taskbar>
      </Screen>
    </>
  );
};

export default App;
